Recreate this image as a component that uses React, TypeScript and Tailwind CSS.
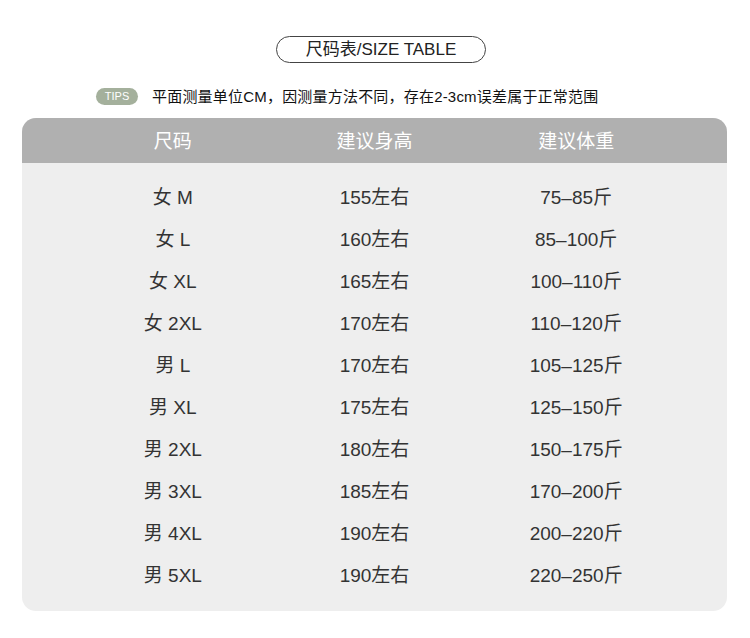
import React from 'react'

const rows = [
  { size: '女 M', height: '155左右', weight: '75–85斤' },
  { size: '女 L', height: '160左右', weight: '85–100斤' },
  { size: '女 XL', height: '165左右', weight: '100–110斤' },
  { size: '女 2XL', height: '170左右', weight: '110–120斤' },
  { size: '男 L', height: '170左右', weight: '105–125斤' },
  { size: '男 XL', height: '175左右', weight: '125–150斤' },
  { size: '男 2XL', height: '180左右', weight: '150–175斤' },
  { size: '男 3XL', height: '185左右', weight: '170–200斤' },
  { size: '男 4XL', height: '190左右', weight: '200–220斤' },
  { size: '男 5XL', height: '190左右', weight: '220–250斤' },
]

const App: React.FC = () => {
  return (
    <div
      className="w-[750px] h-[638px] bg-white"
      style={{ fontFamily: '"Liberation Sans", "Noto Sans CJK SC", sans-serif' }}
    >
      <div className="flex justify-center pt-[36px] pl-[12px]">
        <div className="w-[210px] h-[27px] rounded-full border border-[#444] flex items-center justify-center text-[17px] text-[#222] leading-none">
          尺码表/SIZE TABLE
        </div>
      </div>

      <div className="flex items-center mt-[25px] ml-[96px]">
        <span className="w-[42px] h-[17px] rounded-full bg-[#a4b09c] text-white text-[11px] flex items-center justify-center leading-none">
          TIPS
        </span>
        <span className="ml-[14px] text-[15px] tracking-[0.2px] text-[#111] leading-none">
          平面测量单位CM，因测量方法不同，存在2-3cm误差属于正常范围
        </span>
      </div>

      <div className="mx-[22px] mt-[13px] w-[705px] rounded-[14px] overflow-hidden bg-[#eeeeee]">
        <div className="h-[45px] bg-[#b0b0b0] grid grid-cols-3 px-[50px] pt-[3px] items-center text-white text-[19px]">
          <div className="text-center">尺码</div>
          <div className="text-center">建议身高</div>
          <div className="text-center">建议体重</div>
        </div>
        <div className="px-[50px] py-[14px]">
          {rows.map((r) => (
            <div key={r.size} className="grid grid-cols-3 h-[42px] items-center text-[19px] text-[#333]">
              <div className="text-center">{r.size}</div>
              <div className="text-center">{r.height}</div>
              <div className="text-center">{r.weight}</div>
            </div>
          ))}
        </div>
      </div>
    </div>
  )
}

export default App
